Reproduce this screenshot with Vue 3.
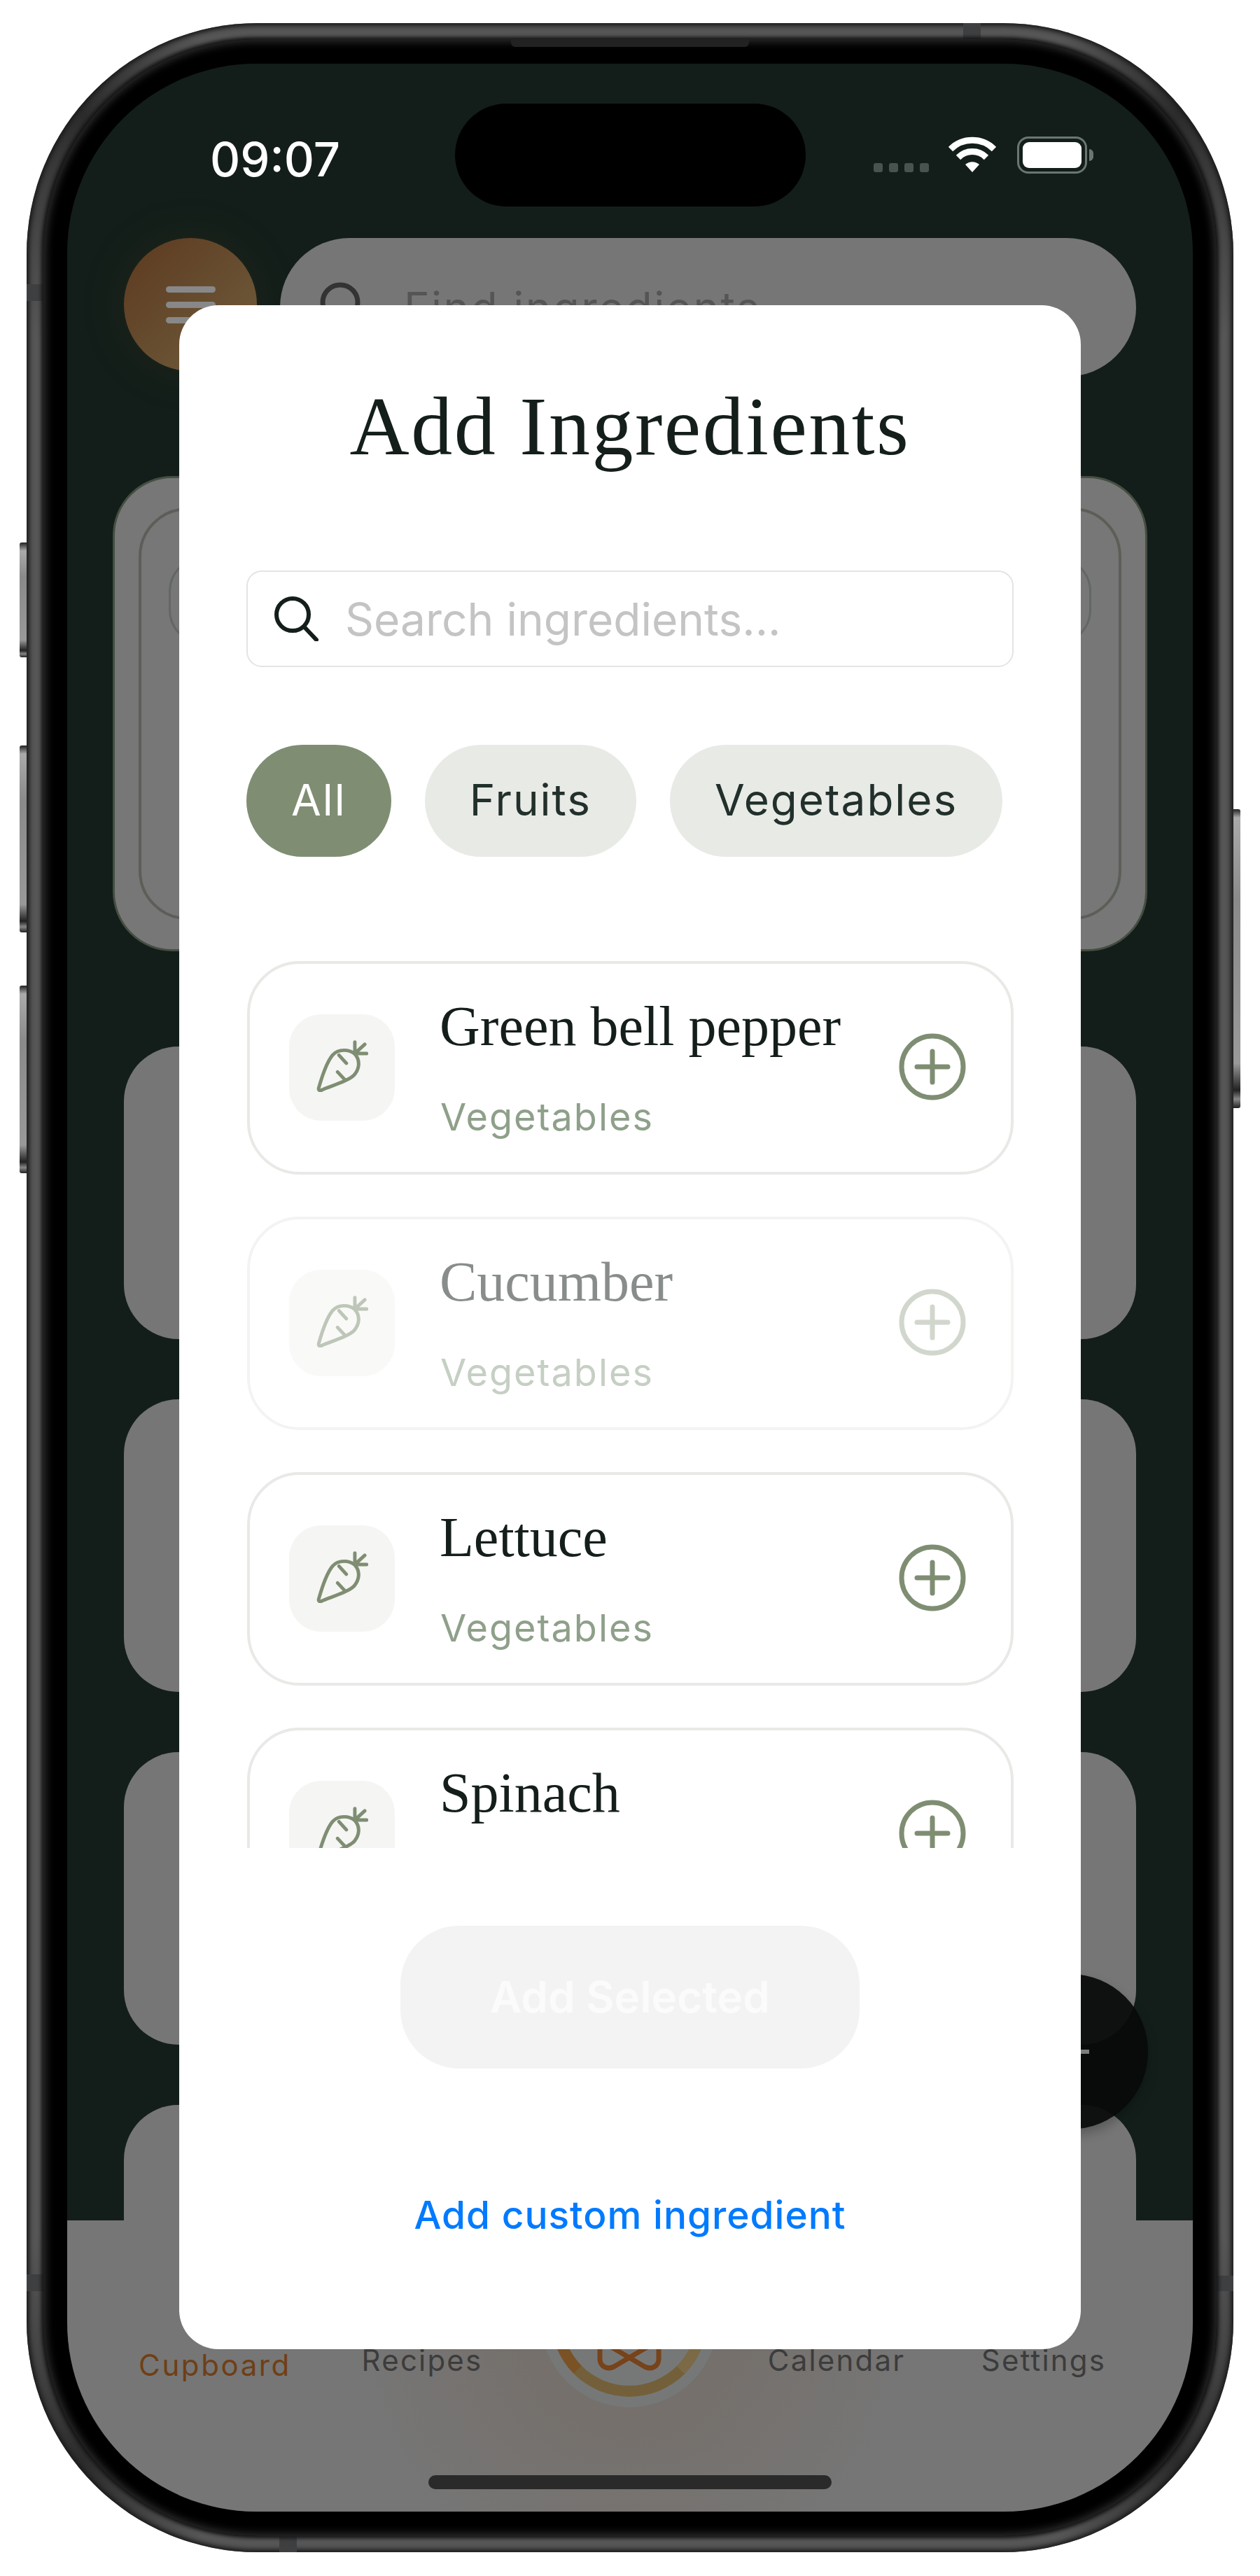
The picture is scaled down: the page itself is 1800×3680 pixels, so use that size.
<template>
  <div class="page">
    <div class="phone">
      <span class="side-btn left" style="top: 742px; height: 164px"></span>
      <span class="side-btn left" style="top: 1032px; height: 267px"></span>
      <span class="side-btn left" style="top: 1375px; height: 268px"></span>
      <span class="side-btn right" style="top: 1123px; height: 427px"></span>
      <span class="band band-top"></span>
      <span class="band band-left1"></span>
      <span class="band band-left2"></span>
      <span class="band band-right"></span>
      <span class="band band-bottom"></span>
      <div class="bezel">
        <span class="speaker"></span>
        <div class="screen">
          <div class="statusbar">
            <div class="time">09:07</div>
            <div class="island"></div>
            <div class="status-icons">
              <div class="signal"><i></i><i></i><i></i><i></i></div>
              <svg class="wifi" viewBox="0 0 68 52" fill="none" stroke="#fff" stroke-width="9">
                <path d="M3 18 A 44 44 0 0 1 65 18" />
                <path d="M14 30 A 28 28 0 0 1 54 30" />
                <path d="M34 51 L24 40 A 15 15 0 0 1 44 40 Z" fill="#fff" stroke="none" />
              </svg>
              <div class="battery"><div class="battery-fill"></div></div>
              <div class="battery-nub"></div>
            </div>
          </div>

          <div class="back">
            <div class="back-header">
              <div class="menu-btn"><i></i><i></i><i></i></div>
              <div class="back-search">
                <svg class="back-search-icon" viewBox="0 0 64 80" fill="none" stroke="#333" stroke-width="7">
                  <circle cx="32" cy="32" r="25" />
                </svg>
                <span>Find ingredients</span>
              </div>
            </div>
            <div class="hero">
              <div class="hero-inner">
                <div class="hero-slot"></div>
              </div>
            </div>
            <div v-for="n in 4" :key="n" class="back-row"></div>
          </div>

          <div class="fab"><i></i></div>

          <div class="nav">
            <div class="nav-item active">Cupboard</div>
            <div class="nav-item">Recipes</div>
            <div class="nav-item center-slot">
              <div class="halo">
                <div class="ring">
                  <svg class="infinity" viewBox="0 0 100 60" fill="none" stroke="#77431a" stroke-width="7" stroke-linejoin="round">
                    <path d="M50 30 L28 43 C18 48 8 42 8 32 L8 16 C8 6 18 12 28 17 L72 43 C82 48 92 42 92 32 L92 16 C92 6 82 12 72 17 Z" />
                  </svg>
                </div>
              </div>
            </div>
            <div class="nav-item">Calendar</div>
            <div class="nav-item">Settings</div>
          </div>
          <div class="home-bar"></div>

          <div class="modal">
            <h1 class="title">Add Ingredients</h1>
            <div class="search">
              <svg class="search-icon" viewBox="0 0 64 64" fill="none" stroke="#141e1a" stroke-width="6" stroke-linecap="round">
                <circle cx="26" cy="26" r="23" />
                <path d="M43 44 L60 62" />
              </svg>
              <span>Search ingredients...</span>
            </div>
            <div class="chips">
              <div v-for="c in chips" :key="c" class="chip" :class="{ on: c === 'All' }">{{ c }}</div>
            </div>
            <div class="list">
              <div v-for="item in items" :key="item.name" class="row" :class="{ dim: item.dim }">
                <div class="tile">
                  <svg class="carrot" viewBox="95 20 225 225" fill="none" stroke="#7f8e73" stroke-width="15" stroke-linecap="round" stroke-linejoin="round">
                    <path d="M105 228 C120 175 140 115 165 85 C190 55 240 60 262 80 C285 105 285 145 255 175 C220 205 150 220 115 238 C108 240 103 236 105 228 Z" />
                    <path d="M262 28 L262 68 M305 38 L268 72 M313 78 L272 78" />
                    <path d="M193 85 L225 120 M187 158 L217 190" />
                  </svg>
                </div>
                <div class="row-text">
                  <div class="row-name">{{ item.name }}</div>
                  <div class="row-cat">Vegetables</div>
                </div>
                <svg class="plus" viewBox="0 0 96 96" fill="none" stroke="#7f8e73" stroke-width="7" stroke-linecap="round">
                  <circle cx="48" cy="48" r="44" />
                  <path d="M26 48 H70 M48 26 V70" />
                </svg>
              </div>
            </div>
            <div class="add-btn">Add Selected</div>
            <div class="custom-link">Add custom ingredient</div>
          </div>
        </div>
      </div>
    </div>
  </div>
</template>

<script setup>
const chips = ['All', 'Fruits', 'Vegetables']
const items = [
  { name: 'Green bell pepper' },
  { name: 'Cucumber', dim: true },
  { name: 'Lettuce' },
  { name: 'Spinach' }
]
</script>

<style>
html, body { margin: 0; background: #fff; }
</style>

<style scoped>
* { box-sizing: border-box; }
.page {
  width: 1800px;
  height: 3680px;
  padding: 33px 38px 34px;
  font-family: Inter, "Noto Sans", sans-serif;
  background: #fff;
}

/* device */
.phone {
  position: relative;
  width: 1724px;
  height: 3613px;
  padding: 23px 24px;
  border-radius: 330px;
  background: conic-gradient(
    #565656 0 19deg, #2c2c2c 25deg, #565656 32deg,
    #565656 148deg, #2c2c2c 155deg, #565656 161deg,
    #565656 199deg, #2c2c2c 205deg, #565656 212deg,
    #565656 328deg, #2c2c2c 335deg, #565656 341deg
  );
  box-shadow: inset 0 0 6px 4px #1c1c1c;
}
.bezel {
  position: relative;
  height: 100%;
  padding: 35px 34px;
  border-radius: 306px;
  background: #000;
  box-shadow: inset 0 0 12px 4px #2c2c2c, 0 0 5px 3px #141414;
}
.speaker {
  position: absolute;
  left: 668px;
  top: 0;
  width: 340px;
  height: 11px;
  border-radius: 0 0 6px 6px;
  background: #222;
}
.side-btn {
  position: absolute;
  width: 10px;
  border-radius: 3px 0 0 3px;
  background: linear-gradient(180deg, #222 0, #aaa 12px, #8a8a8a 30%, #999 85%, #222 94%, #888 97%, #222 100%);
}
.side-btn.left { left: -10px; }
.side-btn.right { right: -10px; border-radius: 0 3px 3px 0; }
.band { position: absolute; background: #3d3f41; }
.band-top { left: 1338px; top: 0; width: 25px; height: 23px; }
.band-left1 { left: 0; top: 373px; width: 24px; height: 24px; }
.band-left2 { left: 0; top: 3216px; width: 24px; height: 24px; }
.band-right { right: 0; top: 3218px; width: 24px; height: 22px; }
.band-bottom { left: 361px; bottom: 0; width: 25px; height: 22px; }

.screen {
  position: relative;
  height: 3497px;
  overflow: hidden;
  border-radius: 270px;
  background: #131e1a;
}

/* status bar */
.statusbar {
  display: grid;
  grid-template-columns: 554px 501px 1fr;
  height: 249px;
  padding-top: 57px;
}
.time {
  padding: 40px 0 0 204px;
  color: #fff;
  font-size: 67px;
  line-height: 80px;
  font-weight: 500;
}
.island {
  height: 147px;
  border-radius: 74px;
  background: #000;
}
.status-icons {
  display: flex;
  align-items: flex-start;
  padding: 47px 0 0 97px;
}
.signal {
  display: flex;
  gap: 9px;
  margin: 38px 28px 0 0;
}
.signal i {
  width: 13px;
  height: 13px;
  border-radius: 3px;
  background: #475350;
}
.wifi { width: 68px; height: 52px; margin-right: 30px; }
.battery {
  width: 100px;
  height: 53px;
  padding: 5px;
  border: 3px solid #6b7673;
  border-radius: 16px;
}
.battery-fill {
  height: 100%;
  border-radius: 9px;
  background: #fff;
}
.battery-nub {
  width: 6px;
  height: 17px;
  margin: 18px 0 0 3px;
  border-radius: 0 8px 8px 0;
  background: #6b7673;
}

/* dimmed page behind the modal */
.back { padding: 0 81px; }
.back-header {
  display: flex;
  gap: 33px;
}
.menu-btn {
  flex: none;
  display: flex;
  flex-direction: column;
  justify-content: center;
  align-items: center;
  gap: 13px;
  width: 190px;
  height: 190px;
  border-radius: 50%;
  background: linear-gradient(135deg, #5d3a1f, #705e3e);
  box-shadow: 0 0 70px rgba(120, 85, 35, 0.12);
}
.menu-btn i {
  width: 71px;
  height: 9px;
  border-radius: 5px;
  background: #888;
}
.back-search {
  position: relative;
  flex: 1;
  display: flex;
  align-items: center;
  height: 198px;
  padding-left: 177px;
  border-radius: 99px;
  background: #767676;
  color: #555;
  font-size: 62px;
  letter-spacing: 2.5px;
}
.back-search-icon {
  position: absolute;
  left: 54px;
  top: 60px;
  width: 64px;
  height: 80px;
}
.hero {
  width: 1478px;
  height: 679px;
  margin: 142px 0 0 -16px;
  padding: 42px 34px;
  border: 3px solid #454e42;
  border-radius: 85px;
  background: #777;
}
.hero-inner {
  height: 589px;
  padding: 66px 39px;
  border: 4px solid #5b5f58;
  border-radius: 70px;
}
.hero-slot {
  height: 126px;
  border: 3px solid #636763;
  border-radius: 50px;
}
.back-row {
  height: 418px;
  margin-top: 86px;
  border-radius: 78px;
  background: #767676;
}
.hero + .back-row { margin-top: 136px; }

.fab {
  position: absolute;
  left: 1322px;
  top: 2729px;
  display: flex;
  align-items: center;
  justify-content: center;
  width: 222px;
  height: 222px;
  border-radius: 50%;
  background: rgba(8, 10, 9, 0.93);
  box-shadow: 0 8px 16px rgba(0, 0, 0, 0.25);
}
.fab i {
  width: 54px;
  height: 6px;
  background: #7c7c7c;
}

/* tab bar */
.nav {
  position: absolute;
  left: 0;
  right: 0;
  bottom: 0;
  display: flex;
  height: 416px;
  padding: 169px 0 0 63px;
  background: radial-gradient(circle 400px at 804px 140px, #75706c 40%, #767676 100%);
}
.nav-item {
  width: 296px;
  height: 50px;
  margin-top: 6px;
  color: #3c3c3c;
  font-size: 42px;
  line-height: 50px;
  letter-spacing: 2.2px;
  text-align: center;
}
.nav-item.active {
  margin-top: 13px;
  color: #6f3f17;
  letter-spacing: 2.6px;
}
.center-slot { position: relative; }
.halo {
  position: absolute;
  left: 21px;
  top: -162px;
  display: flex;
  align-items: center;
  justify-content: center;
  width: 254px;
  height: 254px;
  border-radius: 50%;
  background: #767878;
}
.ring {
  display: flex;
  align-items: center;
  justify-content: center;
  width: 224px;
  height: 224px;
  border: 16px solid #75582f;
  border-color: #7a5226 #7b6a45 #73603a #7a5226;
  border-radius: 50%;
}
.infinity {
  width: 100px;
  height: 60px;
  margin-top: 112px;
}
.home-bar {
  position: absolute;
  left: 516px;
  bottom: 32px;
  width: 576px;
  height: 20px;
  border-radius: 10px;
  background: #2a2a2a;
}

/* modal */
.modal {
  position: absolute;
  left: 160px;
  top: 345px;
  width: 1288px;
  height: 2920px;
  padding: 109px 96px 0;
  border-radius: 56px;
  background: #fff;
}
.title {
  margin: 0;
  color: #141e1a;
  font-family: "Liberation Serif", serif;
  font-size: 118px;
  font-weight: 400;
  line-height: 130px;
  letter-spacing: 2.5px;
  text-align: center;
}
.search {
  display: flex;
  align-items: center;
  gap: 37px;
  height: 138px;
  margin: 140px 0 0;
  padding-left: 38px;
  border: 2px solid #e4e4e4;
  border-radius: 22px;
  color: #c4c4c6;
  font-size: 64px;
}
.search-icon { flex: none; width: 64px; height: 64px; }
.chips {
  display: flex;
  gap: 48px;
  margin-top: 111px;
}
.chip {
  height: 160px;
  padding: 0 64px;
  border-radius: 80px;
  background: #e8eae6;
  color: #22302c;
  font-size: 62px;
  line-height: 158px;
  letter-spacing: 2px;
}
.chip.on {
  background: #7f8e73;
  color: #fff;
}
.list {
  display: flex;
  flex-direction: column;
  gap: 60px;
  height: 1267px;
  margin-top: 149px;
  overflow: hidden;
}
.row {
  flex: none;
  display: flex;
  align-items: center;
  width: 1095px;
  height: 305px;
  margin-left: 1px;
  padding: 0 64px 0 56px;
  border: 4px solid #e8eae6;
  border-radius: 75px;
}
.row.dim { border-color: #f3f4f2; }
.row.dim > * { opacity: 0.5; }
.row.dim > .plus { opacity: 0.35; }
.tile {
  flex: none;
  display: flex;
  align-items: center;
  justify-content: center;
  width: 151px;
  height: 152px;
  margin-top: -1px;
  border-radius: 46px;
  background: #f5f5f3;
}
.carrot { width: 74px; height: 74px; margin-top: -4px; }
.row-text {
  flex: 1;
  margin: -4px 0 0 64px;
}
.row-name {
  color: #141e1a;
  font-family: "Liberation Serif", serif;
  font-size: 80px;
  line-height: 100px;
}
.row-cat {
  margin: 45px 0 0 1px;
  color: #8fa08a;
  font-size: 54px;
  line-height: 70px;
  letter-spacing: 2px;
}
.plus { flex: none; width: 96px; height: 96px; margin-top: -4px; }
.add-btn {
  width: 656px;
  height: 204px;
  margin: 111px auto 0;
  border-radius: 84px;
  background: #f3f3f3;
  color: #fbfbfb;
  font-size: 62px;
  font-weight: 600;
  line-height: 204px;
  text-align: center;
}
.custom-link {
  margin-top: 174px;
  color: #007aff;
  font-size: 55px;
  font-weight: 500;
  line-height: 70px;
  letter-spacing: 1px;
  text-align: center;
}
</style>
